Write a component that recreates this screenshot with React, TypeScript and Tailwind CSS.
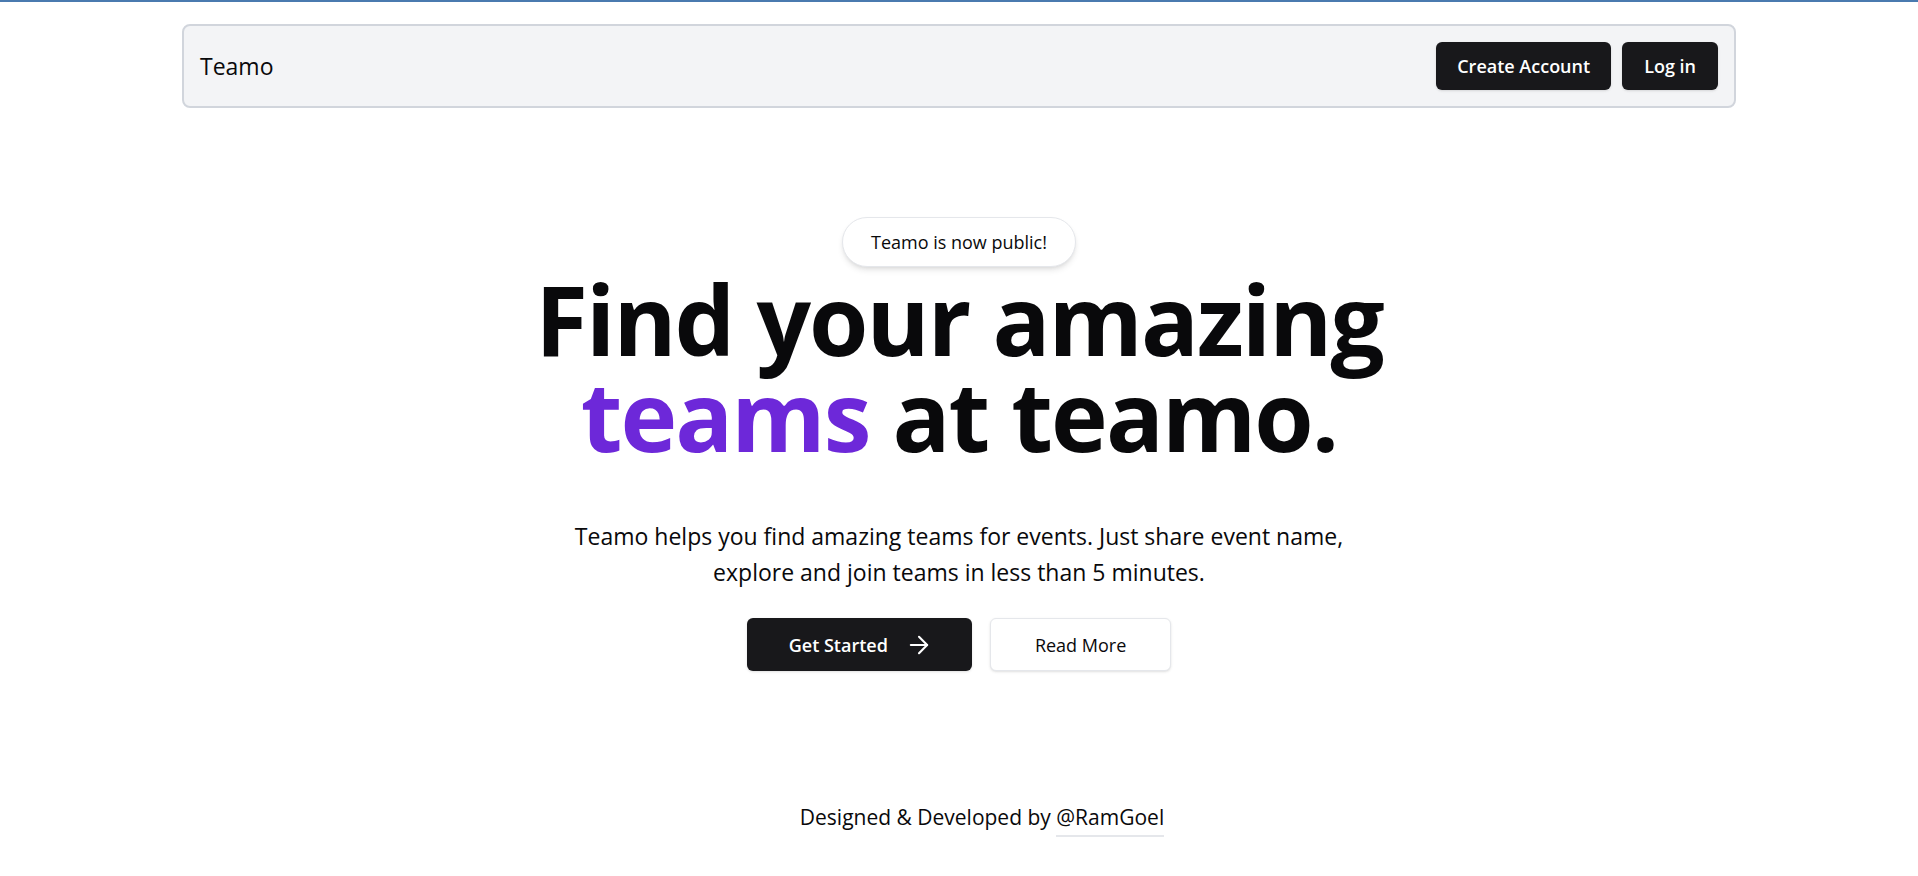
import React from "react";
import { ArrowRight } from "lucide-react";

export default function App() {
  return (
    <div className="min-h-screen bg-white font-['Open_Sans',sans-serif] text-zinc-950">
      <div className="h-[2px] bg-[#4a7aaf]" />
      <nav className="mx-auto mt-[22px] flex w-[1554px] items-center justify-between rounded-lg border-2 border-gray-300 bg-gray-100 p-4">
        <span className="text-[23px] font-medium text-zinc-950">Teamo</span>
        <div className="flex gap-[11px]">
          <button className="h-12 rounded-md bg-zinc-900 px-[21px] text-lg font-semibold text-white shadow">
            Create Account
          </button>
          <button className="h-12 rounded-md bg-zinc-900 px-[22px] text-lg font-semibold text-white shadow">
            Log in
          </button>
        </div>
      </nav>

      <main className="flex flex-col items-center">
        <div className="mt-[109px] rounded-full border border-gray-200 bg-white px-7 py-2.5 text-lg font-medium text-zinc-950 shadow-md">
          Teamo is now public!
        </div>
        <h1 className="mt-1 text-center text-[96px] font-bold leading-none tracking-[-0.02em] text-zinc-950">
          Find your amazing
          <br />
          <span className="text-[#6d28d9]">teams</span> at teamo.
        </h1>
        <p className="mt-[55px] text-center text-[23px] leading-9 text-zinc-950">
          Teamo helps you find amazing teams for events. Just share event name,
          <br />
          explore and join teams in less than 5 minutes.
        </p>
        <div className="mt-[28px] flex gap-[18px]">
          <button className="flex h-[53px] items-center gap-[17px] rounded-md bg-zinc-900 pl-[42px] pr-[39px] text-lg font-semibold text-white shadow">
            Get Started
            <ArrowRight size={28} strokeWidth={1.8} />
          </button>
          <button className="h-[53px] rounded-md border border-gray-200 bg-white px-11 text-lg font-medium text-zinc-950 shadow-sm">
            Read More
          </button>
        </div>
      </main>

      <footer className="mt-[131px] flex justify-center pb-8 pl-[46px]">
        <p className="text-[21px] font-medium text-zinc-950">
          Designed &amp; Developed by{" "}
          <span className="border-b-2 border-gray-200 pb-1">@RamGoel</span>
        </p>
      </footer>
    </div>
  );
}
